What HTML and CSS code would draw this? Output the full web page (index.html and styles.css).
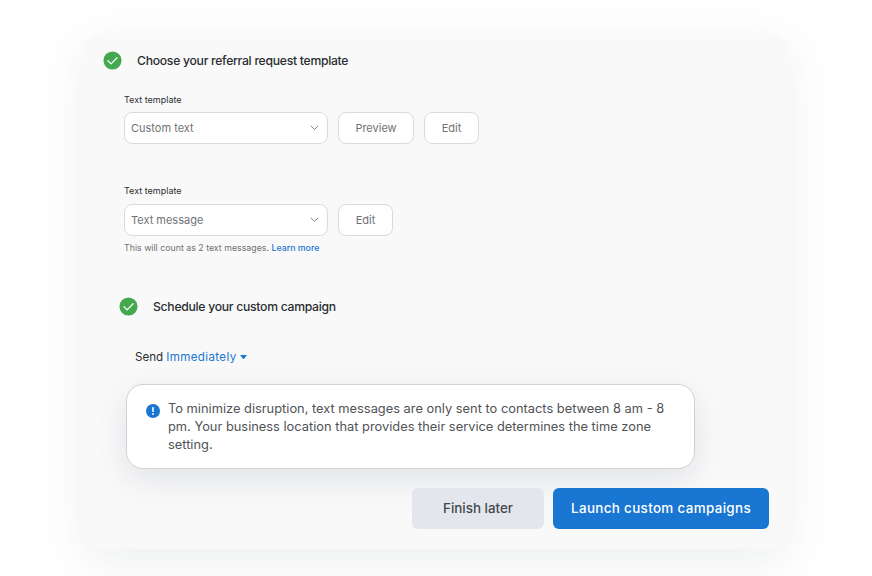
FILE: index.html
```html
<!DOCTYPE html>
<html lang="en">
<head>
<meta charset="utf-8">
<title>Custom campaign</title>
<link rel="stylesheet" href="styles.css">
</head>
<body>
<main class="card">
  <section class="step-head">
    <svg class="check" viewBox="0 0 20 20"><circle cx="10" cy="10" r="9.5" fill="#43a84f"/><path d="M5.2 10.3l3.3 3.2 6.3-6.4" fill="none" stroke="#fff" stroke-width="1.3" stroke-linecap="round" stroke-linejoin="round"/></svg>
    <h2 class="step-title">Choose your referral request template</h2>
  </section>
  <div class="group group-first">
    <div class="label">Text template</div>
    <div class="row">
      <div class="select"><span>Custom text</span><svg class="chev" viewBox="0 0 10 6"><path d="M1 1l4 4 4-4" fill="none" stroke="#777" stroke-width="1"/></svg></div>
      <button class="btn btn-preview">Preview</button>
      <button class="btn btn-edit">Edit</button>
    </div>
  </div>
  <div class="group group-second">
    <div class="label">Text template</div>
    <div class="row row-second">
      <div class="select"><span>Text message</span><svg class="chev" viewBox="0 0 10 6"><path d="M1 1l4 4 4-4" fill="none" stroke="#777" stroke-width="1"/></svg></div>
      <button class="btn btn-edit">Edit</button>
    </div>
    <p class="hint">This will count as 2 text messages. <a class="link" href="#">Learn more</a></p>
  </div>
  <section class="step-head step-second">
    <svg class="check" viewBox="0 0 20 20"><circle cx="10" cy="10" r="9.5" fill="#43a84f"/><path d="M5.2 10.3l3.3 3.2 6.3-6.4" fill="none" stroke="#fff" stroke-width="1.3" stroke-linecap="round" stroke-linejoin="round"/></svg>
    <h2 class="step-title">Schedule your custom campaign</h2>
  </section>
  <div class="send">Send <span class="send-value">Immediately</span><svg class="caret" viewBox="0 0 8 5"><path d="M0 0h8L4 5z" fill="#1976d2"/></svg></div>
  <div class="notice">
    <svg class="info" viewBox="0 0 14 14"><circle cx="7" cy="7" r="7" fill="#1976d2"/><rect x="6.2" y="3" width="1.6" height="5" rx=".6" fill="#fff"/><circle cx="7" cy="10" r=".95" fill="#fff"/></svg>
    <p class="notice-text">To minimize disruption, text messages are only sent to contacts between 8 am - 8 pm. Your business location that provides their service determines the time zone setting.</p>
  </div>
  <div class="actions">
    <button class="action action-later">Finish later</button>
    <button class="action action-launch">Launch custom campaigns</button>
  </div>
</main>
</body>
</html>
```

FILE: styles.css
```css
* { box-sizing: border-box; }
html, body { margin: 0; height: 100%; }
body {
  background: #fff;
  font-family: Inter, "Noto Sans", sans-serif;
  color: #2c2f33;
  padding: 33px 83px 0;
  overflow: hidden;
}
.card {
  width: 706px;
  height: 516px;
  background: #f9f9fa;
  border-radius: 20px;
  box-shadow: 0 12px 48px rgba(60, 75, 85, 0.09);
  padding: 17px 20px 0;
}
.step-head { display: flex; align-items: center; gap: 15px; height: 20px; }
.step-second { margin: 41px 0 0 16px; }
.check { width: 19px; height: 19px; flex: none; }
.step-title { margin: 0; font-size: 12.2px; font-weight: 500; letter-spacing: -0.28px; line-height: 19px; color: #2a2d31; }
.group { margin-left: 21px; }
.group-first { margin-top: 23px; }
.group-second { margin-top: 40px; }
.label { font-size: 9px; font-weight: 400; line-height: 14px; color: #2c2f33; }
.row { display: flex; gap: 10px; margin-top: 5px; }
.row-second { margin-top: 6px; }
.select {
  width: 204px;
  height: 32px;
  background: #fff;
  border: 1px solid #d9dbdd;
  border-radius: 8px;
  display: flex;
  align-items: center;
  justify-content: space-between;
  padding: 0 8px 0 6px;
  font-size: 11px;
  color: #6f7275;
}
.chev { width: 9px; height: 5.4px; }
.btn {
  height: 32px;
  background: #fff;
  border: 1px solid #d9dbdd;
  border-radius: 8px;
  font: inherit;
  font-size: 11px;
  color: #6f7275;
  padding: 0;
}
.btn-preview { width: 76px; }
.btn-edit { width: 55px; }
.hint { margin: 5px 0 0; font-size: 8.8px; line-height: 14px; color: #6f7275; }
.link { color: #1976d2; text-decoration: none; font-weight: 500; }
.send { margin: 33px 0 0 32px; font-size: 11.6px; line-height: 16px; color: #2a2d31; display: flex; align-items: center; gap: 3px; }
.send-value { color: #1976d2; letter-spacing: 0.36px; }
.caret { width: 7px; height: 4.4px; }
.notice {
  width: 569px;
  height: 85px;
  margin: 19px 0 0 23px;
  background: #fff;
  border: 1px solid #cfd2d4;
  border-radius: 17px;
  box-shadow: 0 10px 32px rgba(60, 75, 85, 0.13);
  padding: 15px 20px 0 19px;
  display: flex;
  gap: 8px;
}
.info { width: 14px; height: 14px; flex: none; margin-top: 4px; }
.notice-text { margin: 0; font-size: 12.85px; line-height: 18px; color: #505356; }
.actions { display: flex; justify-content: flex-end; gap: 9px; margin: 19px 0 0; }
.action { height: 41px; border: 0; border-radius: 6px; font: inherit; font-size: 13.4px; font-weight: 500; padding: 0 0 1px; }
.action-later { width: 132px; background: #e3e7ed; color: #44474b; }
.action-launch { width: 216px; background: #1976d2; color: #fff; letter-spacing: 0.35px; }
```
